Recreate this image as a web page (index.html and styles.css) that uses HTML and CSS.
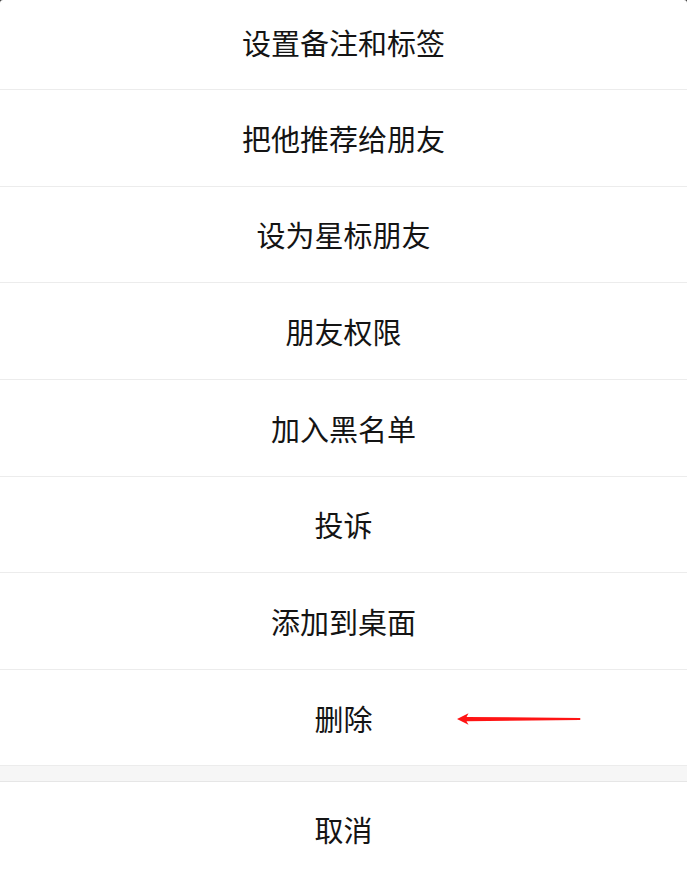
FILE: index.html
```html
<!DOCTYPE html>
<html lang="zh-CN">
<head>
<meta charset="utf-8">
<title>操作菜单</title>
<link rel="stylesheet" href="styles.css">
</head>
<body>
<div class="sheet">
  <ul class="menu">
    <li class="item item-first">设置备注和标签</li>
    <li class="item">把他推荐给朋友</li>
    <li class="item">设为星标朋友</li>
    <li class="item">朋友权限</li>
    <li class="item">加入黑名单</li>
    <li class="item">投诉</li>
    <li class="item">添加到桌面</li>
    <li class="item item-delete">删除
      <svg class="arrow" width="130" height="16" viewBox="0 0 130 16" aria-hidden="true">
        <path d="M1 8 L12.5 2.2 L10.5 5.9 L124 6.9 L124.5 8 L124 9.1 L10.5 10.2 L12.5 13.8 Z" fill="#ff1414"/>
      </svg>
    </li>
  </ul>
  <div class="gap"></div>
  <div class="item cancel">取消</div>
</div>
</body>
</html>
```
FILE: styles.css
```css
html {
  background: #3a3a3a;
}
body {
  margin: 0;
  font-family: "Noto Sans CJK SC", "Noto Sans", sans-serif;
}
.sheet {
  width: 687px;
  height: 878px;
  background: #ffffff;
  border-radius: 3px 3px 0 0;
  overflow: hidden;
  display: flex;
  flex-direction: column;
}
.menu {
  list-style: none;
  margin: 0;
  padding: 0;
}
.item {
  box-sizing: border-box;
  height: 96.64px;
  display: flex;
  align-items: center;
  justify-content: center;
  font-size: 29px;
  color: #141414;
  border-bottom: 1px solid #ececec;
  letter-spacing: 0;
}
.item-first {
  height: 90px;
  padding-bottom: 6px;
}
.item-delete {
  position: relative;
}
.arrow {
  position: absolute;
  left: 456px;
  top: 41px;
}
.gap {
  height: 15px;
  background: #f6f6f6;
  border-bottom: 1px solid #e6e6e6;
}
.cancel {
  flex: 1;
  height: auto;
  border-bottom: none;
  padding-bottom: 2px;
}
```
